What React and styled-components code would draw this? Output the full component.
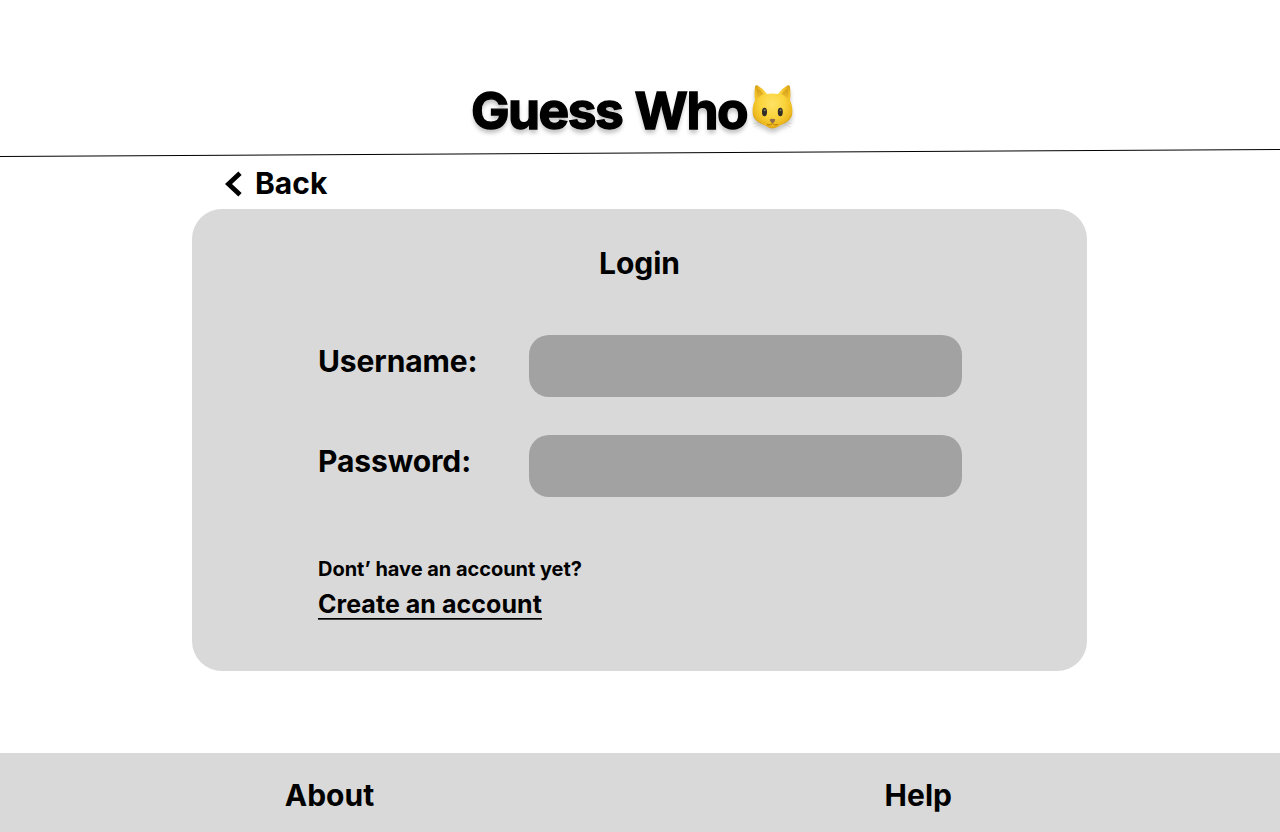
import React from 'react';
import styled, { createGlobalStyle } from 'styled-components';

const GlobalStyle = createGlobalStyle`
  * { box-sizing: border-box; }
  body { margin: 0; background: #fff; color: #000; font-family: Inter, sans-serif; font-weight: 700; }
`;

const Page = styled.div`
  width: 1280px;
  height: 832px;
  display: flex;
  flex-direction: column;
  overflow: hidden;
`;

const Header = styled.header`
  height: 149px;
  padding: 79px 0 0 471px;
  display: flex;
  align-items: flex-start;
`;

const Title = styled.h1`
  margin: 0;
  width: 281px;
  font-size: 51.5px;
  line-height: 62px;
  font-weight: 700;
  letter-spacing: -1.55px;
  word-spacing: 1.6px;
  white-space: nowrap;
  -webkit-text-stroke: 1.4px #000;
  text-shadow: 0 4px 4px rgba(0, 0, 0, 0.25);
`;

const Cat = styled.svg`
  display: block;
  flex: none;
  margin-top: 5px;
  width: 42px;
  height: 46px;
  overflow: visible;
  filter: drop-shadow(0 4px 2px rgba(0, 0, 0, 0.22));
`;

const Divider = styled.svg`
  display: block;
  flex: none;
  width: 1280px;
  height: 8px;
`;

const BackLink = styled.a`
  height: 52px;
  padding: 8px 0 0 225px;
  display: flex;
  align-items: flex-start;
  font-size: 30px;
  line-height: 36px;
`;

const Chevron = styled.svg`
  width: 17px;
  height: 26px;
  margin: 6px 13px 0 0;
`;

const Card = styled.main`
  width: 895px;
  height: 462px;
  margin-left: 192px;
  padding: 36px 126px 0 126px;
  border-radius: 30px;
  background: #d9d9d9;
`;

const Heading = styled.h2`
  margin: 0 0 54px;
  font-size: 30px;
  line-height: 36px;
  letter-spacing: -0.05px;
  text-align: center;
`;

const Field = styled.label`
  display: flex;
  height: 62px;
  margin-bottom: 38px;
`;

const FieldName = styled.span`
  flex: none;
  width: 211px;
  padding-top: 8px;
  font-size: 30px;
  line-height: 36px;
  letter-spacing: -0.1px;
`;

const Input = styled.input`
  flex: none;
  width: 433px;
  height: 62px;
  padding: 0 20px;
  border: 0;
  outline: 0;
  border-radius: 20px;
  background: #a2a2a2;
  font: inherit;
  font-size: 24px;
`;

const Hint = styled.p`
  margin: 60px 0 0;
  font-size: 20px;
  line-height: 24px;
  letter-spacing: -0.04px;
`;

const CreateLink = styled.a`
  display: block;
  width: 224px;
  height: 31px;
  margin-top: 8px;
  font-size: 25px;
  line-height: 30px;
  letter-spacing: 0.05px;
  white-space: nowrap;
  background: linear-gradient(#000 0 1px, #444 1px 2px) 0 29px / 100% 2px no-repeat;
`;

const Footer = styled.footer`
  height: 79px;
  margin-top: auto;
  padding: 24px 0 0 284.8px;
  display: flex;
  background: #d9d9d9;
`;

const FooterLink = styled.a`
  flex: none;
  width: 599.8px;
  font-size: 30px;
  line-height: 36px;
`;

const LastFooterLink = styled(FooterLink)`
  width: auto;
`;

function CatFace() {
  return (
    <Cat viewBox="0 0 42 46" aria-label="Cat">
      <defs>
        <radialGradient id="fur" cx="50%" cy="43%" r="62%">
          <stop offset="0" stopColor="#ffe265" />
          <stop offset=".5" stopColor="#fad43c" />
          <stop offset=".82" stopColor="#edb91f" />
          <stop offset="1" stopColor="#c58d0c" />
        </radialGradient>
        <linearGradient id="ear" x1="0" y1="0" x2="0" y2="1">
          <stop offset="0" stopColor="#d19b18" />
          <stop offset="1" stopColor="#edbe2d" />
        </linearGradient>
      </defs>
      <path d="M3.2 2.3Q3.7.6 5.7 1.5Q11 4.5 15 10Q20.5 9 26 10Q30 4.5 35.3 1.5Q37.3.6 37.8 2.3Q39 9 38 16.5C40 20 40.8 25 40.2 30C39.5 35.5 34.5 38.8 29.5 40.8C26.5 42 24.5 44.5 20.5 44.5C16.5 44.5 14.5 42 11.5 40.8C6.5 38.8 1.5 35.5 .8 30C.2 25 1 20 3 16.5Q2 9 3.2 2.3Z" fill="url(#fur)" />
      <path d="M5 4Q9 6.5 11.5 10Q7.5 12 5.2 14.5Q4.2 9 5 4Z" fill="url(#ear)" />
      <path d="M36 4Q32 6.5 29.5 10Q33.5 12 35.8 14.5Q36.8 9 36 4Z" fill="url(#ear)" />
      <ellipse cx="12.5" cy="28" rx="2.5" ry="4.2" fill="#302c26" />
      <ellipse cx="28.3" cy="28" rx="2.5" ry="4.2" fill="#302c26" />
      <circle cx="12.8" cy="26.3" r="1" fill="#857c6b" />
      <circle cx="28.6" cy="26.3" r="1" fill="#857c6b" />
      <path d="M17.7 35.5Q20.5 34 23.3 35.5Q23 38 20.5 39.2Q18 38 17.7 35.5Z" fill="#8d6b4c" />
      <path d="M15 40.5Q18.5 42 20.5 39.5Q22.5 42 26 40.5" fill="none" stroke="#b87908" strokeWidth="1" />
      <path d="M9 38L.5 40M10 39.5L2 43M32 38L40.5 40M31 39.5L39 43" stroke="#9b8d70" strokeWidth=".4" opacity=".5" />
    </Cat>
  );
}

export default function App() {
  return (
    <>
      <GlobalStyle />
      <Page>
        <Header>
          <Title>Guess Who</Title>
          <CatFace />
        </Header>
        <Divider viewBox="0 0 1280 8">
          <path d="M0 7.5L1280 .5" stroke="#000" />
        </Divider>
        <BackLink>
          <Chevron viewBox="0 0 17 26">
            <path d="M15 2.2L3.5 13L15 23.8" fill="none" stroke="#000" strokeWidth="4.8" />
          </Chevron>
          Back
        </BackLink>
        <Card>
          <Heading>Login</Heading>
          <Field>
            <FieldName>Username:</FieldName>
            <Input type="text" />
          </Field>
          <Field>
            <FieldName>Password:</FieldName>
            <Input type="password" />
          </Field>
          <Hint>Dont’ have an account yet?</Hint>
          <CreateLink>Create an account</CreateLink>
        </Card>
        <Footer>
          <FooterLink>About</FooterLink>
          <LastFooterLink>Help</LastFooterLink>
        </Footer>
      </Page>
    </>
  );
}
